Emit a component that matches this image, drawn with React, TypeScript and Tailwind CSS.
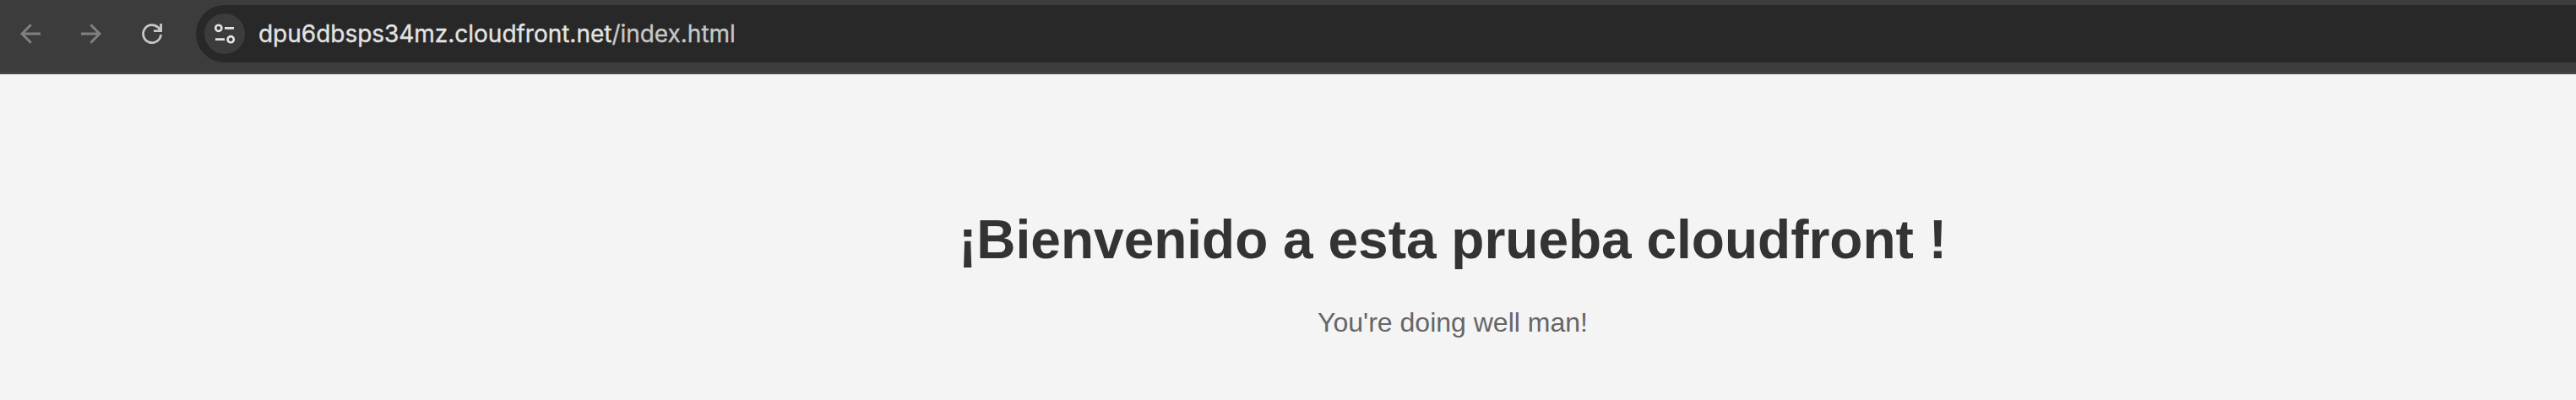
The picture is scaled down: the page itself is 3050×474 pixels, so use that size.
function BackIcon() {
  return (
    <svg className="block size-6" viewBox="0 0 24 24" fill="none" stroke="#808080" strokeWidth="3">
      <path d="M24 12H2M12.7 1.3 2 12l10.7 10.7" />
    </svg>
  );
}

function ForwardIcon() {
  return (
    <svg className="block size-6" viewBox="0 0 24 24" fill="none" stroke="#808080" strokeWidth="3">
      <path d="M0 12h22M11.3 1.3 22 12 11.3 22.7" />
    </svg>
  );
}

function ReloadIcon() {
  return (
    <svg className="block size-6" viewBox="0 0 24 24" fill="none" stroke="#c7c7c7" strokeWidth="2.8">
      <path d="M22.5 13A10.5 10.5 0 1 1 19.4 4.6L22 7.8" />
      <path d="M22.6 0v8.6H14" />
    </svg>
  );
}

function SiteSettingsIcon() {
  return (
    <svg className="block size-6" viewBox="0 0 24 24" fill="none" stroke="#e3e3e3" strokeWidth="2.6">
      <circle cx="4.8" cy="5.3" r="3.6" />
      <path d="M12 5.4h11M1 18.6h11" />
      <circle cx="19.2" cy="18.7" r="3.6" />
    </svg>
  );
}

function Toolbar() {
  return (
    <header className="flex h-[88px] items-start border-b-2 border-[#484848] bg-[#3c3c3c] pt-1.5">
      <nav className="flex h-[68px] w-[232px] shrink-0 items-center gap-12 pl-6">
        <button aria-label="Back"><BackIcon /></button>
        <button aria-label="Forward"><ForwardIcon /></button>
        <button aria-label="Reload"><ReloadIcon /></button>
      </nav>
      <div className="flex h-[68px] flex-1 items-center rounded-l-full bg-[#282828] pl-2.5">
        <span className="flex size-12 items-center justify-center rounded-full bg-[#3c3c3c]">
          <SiteSettingsIcon />
        </span>
        <span className="ml-4 whitespace-nowrap font-['Inter',sans-serif] text-[28px] leading-[34px] tracking-[-0.02px] text-[#c7c7c7] [-webkit-text-stroke:0.35px_currentColor]">
          <span className="text-[#e3e3e3]">dpu6dbsps34mz.cloudfront.net</span>/index.html
        </span>
      </div>
    </header>
  );
}

export default function App() {
  return (
    <div className="h-[474px] w-full overflow-hidden bg-[#f4f4f4]">
      <Toolbar />
      <main className="w-[3440px] pt-40 text-center font-['Liberation_Sans',Arial,sans-serif]">
        <h1 className="text-[64px] leading-[72px] font-bold text-[#333333]">
          ¡Bienvenido a esta prueba cloudfront !
        </h1>
        <p className="mt-11 text-[32px] leading-9 text-[#666666]">You're doing well man!</p>
      </main>
    </div>
  );
}
